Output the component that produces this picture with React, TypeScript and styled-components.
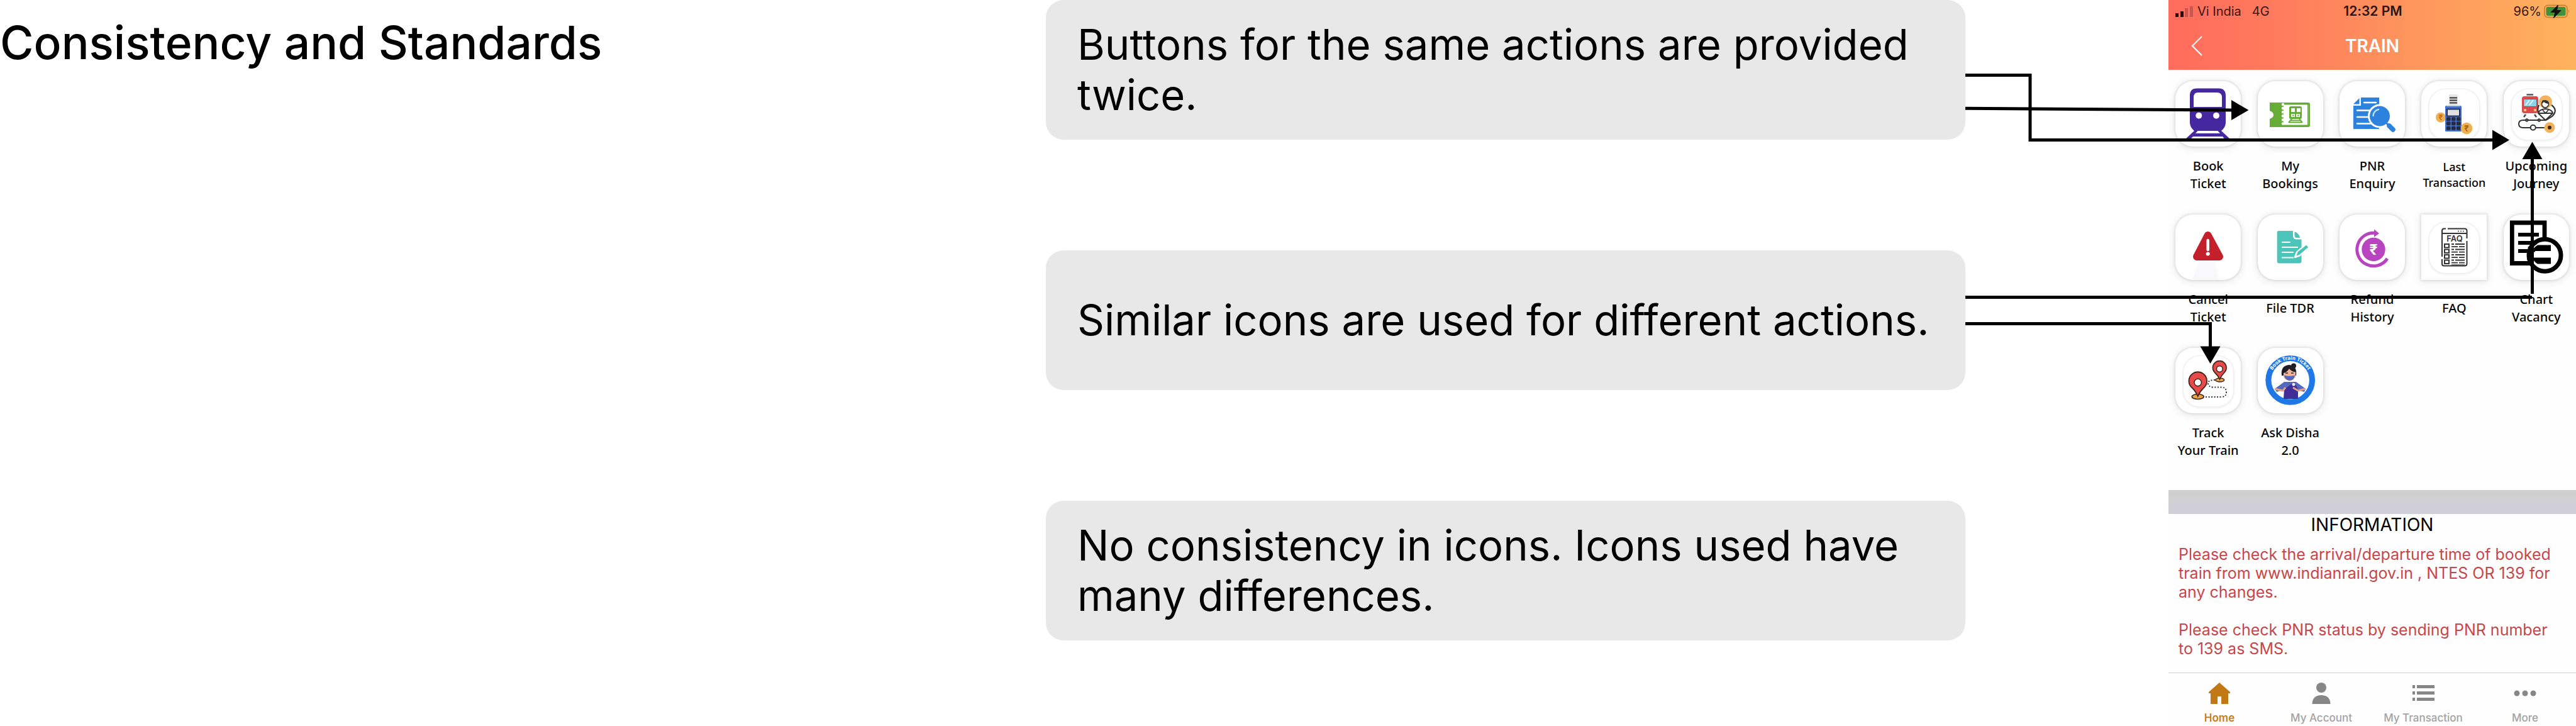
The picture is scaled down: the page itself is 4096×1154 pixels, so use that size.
import React from "react";
import styled, { createGlobalStyle } from "styled-components";

const GlobalStyle = createGlobalStyle`
  *, *::before, *::after { box-sizing: border-box; }
  body { margin: 0; background: #fff; color: #000; font-family: Inter, "Liberation Sans", sans-serif; font-variant-ligatures: none; }
  h1, h2, p, ul { margin: 0; padding: 0; }
  button { border: 0; padding: 0; background: none; font: inherit; color: inherit; cursor: pointer; }
`;

/* ---------- board ---------- */

const Board = styled.main`
  position: relative;
  display: grid;
  grid-template-columns: 1fr 1462px 648px;
  column-gap: 323px;
  align-items: start;
`;

const Intro = styled.div`
  display: grid;
  grid-column: 1 / 3;
  grid-template-columns: 1fr 1462px;
`;

const Title = styled.h1`
  padding-top: 24px;
  font-size: 73px;
  line-height: 88px;
  font-weight: 500;
  white-space: nowrap;
`;

const Notes = styled.ul`
  display: flex;
  flex-direction: column;
  gap: 176px;
  list-style: none;
`;

const Note = styled.li`
  display: flex;
  align-items: center;
  min-height: 222px;
  padding: 30px 50px;
  border-radius: 28px;
  background: #e8e8e8;
  font-size: 67px;
  line-height: 80px;
`;

const Arrows = styled.svg`
  position: absolute;
  top: 0;
  right: 0;
  pointer-events: none;
`;

/* ---------- phone ---------- */

const Phone = styled.section`
  display: flex;
  flex-direction: column;
  background: #fefefe;
`;

const PhoneHeader = styled.header`
  background: linear-gradient(90deg, #ff6c5c 0%, #ff7a5c 25%, #fd965c 60%, #ffb35c 100%);
`;

const StatusBar = styled.div`
  display: grid;
  grid-template-columns: 1fr auto 1fr;
  padding: 6px 9px 0 11px;
  font-size: 20px;
  line-height: 24px;
  color: #3a1512;
`;

const StatusGroup = styled.div<{ $end?: boolean }>`
  display: flex;
  align-items: center;
  justify-content: ${(p) => (p.$end ? "flex-end" : "flex-start")};
  gap: ${(p) => (p.$end ? "4px" : "7px")};
`;

const Network = styled.span`
  padding-left: 10px;
`;

const Clock = styled.time`
  font-size: 21px;
  font-weight: 600;
  color: #2b1410;
`;

const NavBar = styled.div`
  display: grid;
  grid-template-columns: 1fr auto 1fr;
  align-items: center;
  padding: 27px 36px 22px;
  color: #fff;
`;

const BackButton = styled.button`
  display: flex;
  justify-self: start;
`;

const NavTitle = styled.h2`
  font-size: 28px;
  line-height: 32px;
  font-weight: 600;
`;

const Services = styled.div`
  display: grid;
  grid-template-columns: repeat(5, minmax(0, 1fr));
  gap: 35px 26px;
  padding: 18px 11px 49px;
`;

const Service = styled.button`
  display: flex;
  flex-direction: column;
  align-items: center;
  gap: 17px;
`;

const Tile = styled.span<{ $square?: boolean }>`
  display: block;
  width: 104px;
  height: 104px;
  border-radius: ${(p) => (p.$square ? "0" : "28px")};
  background: #fff;
  box-shadow: 0 0 3px 2px rgba(0, 0, 0, 0.07), 0 2px 12px 2px rgba(0, 0, 0, 0.08);

  svg { display: block; }
`;

const Label = styled.span<{ $small?: boolean }>`
  display: flex;
  align-items: center;
  min-height: 56px;
  font-family: "Noto Sans", "Open Sans", sans-serif;
  font-weight: 500;
  font-size: ${(p) => (p.$small ? "18px" : "20px")};
  line-height: ${(p) => (p.$small ? "25px" : "28px")};
  color: #050505;
  white-space: pre;
`;

const Band = styled.div`
  height: 38px;
  background: linear-gradient(#cfcfcf 0%, #d1d1d1 35%, #d0cfd7 60%);
`;

const Info = styled.section`
  padding: 1px 16px 23px;
`;

const InfoTitle = styled.h2`
  margin-bottom: 16px;
  font-size: 28px;
  line-height: 32px;
  font-weight: 400;
  text-align: center;
`;

const InfoText = styled.p`
  font-size: 25px;
  line-height: 30px;
  color: #c5474b;

  & + & { margin-top: 30px; }
`;

const TabBar = styled.nav`
  display: grid;
  grid-template-columns: repeat(4, 1fr);
  padding: 15px 0 3px;
  border-top: 1px solid #cfcfcf;
`;

const Tab = styled.button<{ $active?: boolean }>`
  display: flex;
  flex-direction: column;
  align-items: center;
  gap: 12px;
  font-size: 17px;
  line-height: 20px;
  font-weight: ${(p) => (p.$active ? 600 : 500)};
  color: ${(p) => (p.$active ? "#c87d1a" : "#a3a3a3")};
`;

/* ---------- service icons (104 x 104 artwork) ---------- */

const Art = ({ children }: { children: React.ReactNode }) => (
  <svg width="104" height="104" viewBox="0 0 104 104" aria-hidden="true">
    {children}
  </svg>
);

const InnerTile = () => (
  <>
    <rect x="10" y="11" width="85" height="86" rx="29" fill="#f8f8f8" />
    <rect x="11.500" y="12" width="82" height="83" rx="27.500" fill="#f1f1f1" />
    <rect x="13" y="13" width="79" height="80" rx="26" fill="#fff" />
  </>
);

const Rupee = ({ x, y, size, fill }: { x: number; y: number; size: number; fill: string }) => (
  <text x={x} y={y} fontSize={size} fill={fill} fontWeight="700" textAnchor="middle" fontFamily="Inter, 'DejaVu Sans', sans-serif">
    ₹
  </text>
);

const BookIcon = () => (
  <Art>
    <path d="M34 11.500H69Q80 11.500 80 23V66Q80 73 73 79L86 91H17L30 79Q23 73 23 66V23Q23 11.500 34 11.500Z" fill="#4527a0" />
    <path d="M36 18H66Q74 18 74 26V41H29V26Q29 18 36 18Z" fill="#fff" />
    <circle cx="37.300" cy="54.700" r="5" fill="#fff" />
    <circle cx="65" cy="54.700" r="5" fill="#fff" />
    <path d="M35.500 79H67.500L71 83H32Z M28 88H75L77.500 91H25Z" fill="#fff" />
  </Art>
);

const TicketIcon = () => (
  <Art>
    <path d="M19 34H80Q83 34 83 37V70Q83 73 80 73H19V60Q25 58 25 53.500Q25 49 19 47Z" fill="#66ad35" />
    <path d="M41 37.500H79V69.500H41Z" fill="#fff" />
    <path d="M40 37V71" stroke="#fff" strokeWidth="4.500" strokeDasharray="0.1 6" strokeLinecap="round" />
    <path d="M80.500 38V69" stroke="#8cc665" strokeWidth="1" />
    <rect x="50" y="40" width="20" height="20" rx="2.500" fill="#66ad35" />
    <path d="M53 43h6v6h-6zM62 43h6v6h-6z" fill="#fff" />
    <path d="M53 52h14v5h-14z" fill="#fff" />
    <path d="M55 54.500h2.500M63 54.500h2.500M60 52v5" stroke="#66ad35" strokeWidth="2" />
    <path d="M54 60l-5 6M66 60l5 6M53 62.500h14M50 65.500h20" stroke="#66ad35" strokeWidth="2" />
  </Art>
);

const EnquiryIcon = () => (
  <Art>
    <path d="M34 26H63V76H22V39H34Z" fill="#2c82dc" />
    <path d="M22 36.500L31.500 27V36.500Z" fill="#2c82dc" />
    <path d="M39 34H58M28 46.500H52M28 57H46M28 67.500H54" stroke="#fff" strokeWidth="2.500" strokeLinecap="round" />
    <circle cx="64" cy="55.500" r="19" fill="#fff" />
    <path d="M75 67L85 77" stroke="#fff" strokeWidth="10" />
    <path d="M74 66L77 69" stroke="#2c82dc" strokeWidth="3" />
    <circle cx="64" cy="55.500" r="16" fill="#2c82dc" />
    <path d="M79 71L85 77" stroke="#2c82dc" strokeWidth="7.500" strokeLinecap="round" />
    <path d="M53.500 55A10.500 10.500 0 0 1 62 45" stroke="#b9e0ff" strokeWidth="2.500" strokeLinecap="round" fill="none" />
  </Art>
);

const LastTransactionIcon = () => (
  <Art>
    <InnerTile />
    <rect x="44" y="21" width="14" height="20" fill="#e6e6e6" />
    <path d="M45 26.500H57M45 30.500H57M45 34.500H57" stroke="#333" strokeWidth="1.800" />
    <circle cx="31" cy="57.700" r="8" fill="#efb052" />
    <Rupee x={31} y={62} size={12} fill="#bd711b" />
    <rect x="38" y="39" width="26" height="41" rx="1.500" fill="#3e6fd2" />
    <path d="M40 39H62" stroke="#bcd6f5" strokeWidth="2" />
    <rect x="41" y="44.500" width="20" height="11" fill="#e1e1e1" stroke="#263257" strokeWidth="2" />
    {[60, 67, 74.5].map((y) =>
      [43, 51, 59].map((x) => <rect key={`${x}-${y}`} x={x - 3} y={y - 2.8} width="6.500" height="6" rx="1.500" fill="#262b3c" />)
    )}
    <circle cx="72" cy="75" r="9.300" fill="#efb052" />
    <Rupee x={72} y={80} size={13} fill="#a96516" />
  </Art>
);

const JourneyIcon = () => (
  <Art>
    <InnerTile />
    <path d="M36.500 21.500H47" stroke="#555" strokeWidth="2.500" />
    <rect x="29" y="24" width="26" height="27" rx="4" fill="#e04a4c" />
    <rect x="31.500" y="28.500" width="21" height="12" rx="1.500" fill="#8ed2e6" stroke="#c63b40" />
    <path d="M35 38L41 30M41 38L47 30" stroke="#e4f8ff" strokeWidth="2" />
    <circle cx="34" cy="46" r="2" fill="#ffdc82" />
    <circle cx="50" cy="46" r="2" fill="#ffdc82" />
    <path d="M35 53L32 57M49 53L52 57" stroke="#444" strokeWidth="2.500" />
    <circle cx="66.500" cy="33" r="10.500" fill="#f0b25a" />
    <path d="M56 38Q52 47 57 52M76 38Q87 46 77 56L67 62" stroke="#333" strokeWidth="2.200" fill="none" />
    <path d="M55 51L66.500 62L78 51Q77 45 66.500 44Q56 45 55 51Z" fill="#fff" stroke="#333" strokeWidth="2" />
    <path d="M55 51H78M62 46L66.500 51L71 46" stroke="#333" strokeWidth="1.800" fill="none" />
    <circle cx="66" cy="36.500" r="5.500" fill="#fff" stroke="#333" strokeWidth="1.600" />
    <path d="M60.500 36Q60 30 64 30Q72 30 72 36Q67 36 64 33Q62 35 60.500 36Z" fill="#333" />
    <path d="M66 62H31Q24 62 24 68Q24 74 31 74H66" stroke="#333" strokeWidth="2" fill="none" />
    <circle cx="36.700" cy="62" r="2.300" fill="#555" stroke="#222" />
    <circle cx="56.300" cy="62" r="2.300" fill="#555" stroke="#222" />
    <circle cx="46.700" cy="73.700" r="4" fill="#fff" stroke="#333" strokeWidth="2" />
    <circle cx="73" cy="73.700" r="8.500" fill="#f0b25a" />
    <circle cx="73" cy="73.700" r="3" fill="#41231d" />
  </Art>
);

const CancelIcon = () => (
  <Art>
    <path d="M38 75H62L69 103H26Z" fill="#f9f9fd" />
    <path d="M51.700 33L34 67H70Z" fill="#c4202b" stroke="#c4202b" strokeWidth="12" strokeLinejoin="round" />
    <path d="M51.700 41V56" stroke="#fff" strokeWidth="4.500" strokeLinecap="round" />
    <circle cx="51.700" cy="62.500" r="3" fill="#fff" />
  </Art>
);

const FileIcon = () => (
  <Art>
    <path d="M33 26H56V34Q56 39.500 62 39.500H69.500V74Q69.500 77.500 66 77.500H34Q30.700 77.500 30.700 74V29Q30.700 26 33 26Z" fill="#4cc4b9" />
    <path d="M58.500 27.500Q64 28 67.500 37H62Q58.500 37 58.500 33Z" fill="#4cc4b9" />
    <path d="M39 44H51M39 52H63M39 60H56M39 68.500H56" stroke="#fff" strokeWidth="2.200" strokeLinecap="round" />
    <path d="M59 68L62 60L77 47L82 52L67 65Z" fill="#4cc4b9" stroke="#fff" strokeWidth="2.500" strokeLinejoin="round" />
    <path d="M64.500 61.500L78.500 50.500" stroke="#4cc4b9" strokeWidth="4.500" />
  </Art>
);

const RefundIcon = () => (
  <Art>
    <circle cx="54" cy="55.500" r="18.700" fill="#b944bf" />
    <path d="M76 70A26.300 26.300 0 1 1 58 29.500" stroke="#b944bf" strokeWidth="5" fill="none" />
    <path d="M55 23.500L63 30L55 36Z" fill="#b944bf" />
    <Rupee x={54} y={64} size={23} fill="#fff" />
  </Art>
);

const FaqIcon = () => (
  <Art>
    <InnerTile />
    <path d="M39 22.500H36Q33 22.500 33 26V67M42 22.500H69Q72.500 22.500 72.500 26V38M72.500 42V78Q72.500 81.500 69 81.500H36Q33 81.500 33 78V71M33 30H72" stroke="#333" strokeWidth="2" fill="none" />
    <path d="M58 26.500H69" stroke="#555" strokeWidth="1.500" strokeDasharray="2 2" />
    <text x="53" y="43" fontSize="13" fontWeight="600" textAnchor="middle" fill="#333" fontFamily="Inter, sans-serif">
      FAQ
    </text>
    {[47, 55.5, 64, 72.5].map((y) => (
      <g key={y} stroke="#333" fill="none">
        <rect x="37" y={y} width="7" height="5.500" strokeWidth="2" />
        <path d={`M48 ${y}h4M54 ${y}h15M48 ${y + 4.2}h10M60 ${y + 4.2}h9`} strokeWidth="1.800" />
      </g>
    ))}
    <path d="M48 80H69" stroke="#333" strokeWidth="1.200" />
  </Art>
);

const ChartIcon = () => (
  <Art>
    <path d="M65 37V13H13.300V77.500H48" stroke="#000" strokeWidth="6.800" fill="none" />
    <path d="M23 32H56M23 45H47M23 58H39" stroke="#000" strokeWidth="6" />
    <circle cx="65.500" cy="64.700" r="25.500" fill="#fff" stroke="#000" strokeWidth="7" />
    <path d="M54 48.500H75V58H45Q48 52 54 48.500ZM45 68.500H75V78.500H54Q48 75 45 68.500Z" fill="#000" />
    <path d="M39 53L52 46M39 58H50M39 64H44" stroke="#000" strokeWidth="3" />
  </Art>
);

const TrackIcon = () => (
  <Art>
    <InnerTile />
    <path d="M63 51Q52 51 52 56Q52 62 60 62.500H74Q81 63 81 70Q81 78 73 78H46" stroke="#333" strokeWidth="2" strokeDasharray="2 2.500" fill="none" />
    <ellipse cx="35.700" cy="77.500" rx="9.500" ry="4" fill="#e9a54b" stroke="#42251d" strokeWidth="1.700" />
    <path d="M35.700 77Q32 68 25 62A14.300 14.300 0 1 1 46.500 62Q39 69 35.700 77Z" fill="#e84a49" stroke="#42251d" strokeWidth="1.800" />
    <circle cx="35.700" cy="55" r="5.700" fill="#fff" stroke="#42251d" strokeWidth="1.500" />
    <ellipse cx="70.700" cy="51" rx="7" ry="3" fill="#e9a54b" stroke="#42251d" strokeWidth="1.500" />
    <path d="M70.500 50Q68 44 62.500 39A10.800 10.800 0 1 1 78 39Q73 44 70.500 50Z" fill="#e84a49" stroke="#42251d" strokeWidth="1.700" />
    <circle cx="70.300" cy="33.500" r="4.800" fill="#fff" stroke="#42251d" strokeWidth="1.500" />
  </Art>
);

const DishaIcon = () => (
  <Art>
    <circle cx="51.700" cy="51.300" r="34.800" fill="#fff" stroke="#2078e6" strokeWidth="9.200" />
    <path id="disha-arc" d="M19.200 51.300A32.500 32.500 0 0 1 84.200 51.300" fill="none" />
    <text fontSize="8" fontWeight="700" fill="#fff" fontFamily="'Noto Sans', sans-serif" textAnchor="middle">
      <textPath href="#disha-arc" startOffset="50%">Book Train Ticket</textPath>
    </text>
    <circle cx="57" cy="28.500" r="4" fill="#211b26" />
    <path d="M38 44Q36 28 50 27Q63 28 61 44Z" fill="#211b26" />
    <path d="M41 40Q46 39 50 33Q55 39 60 38V46Q56 52 50 52Q43 51 41 46Z" fill="#efb497" />
    <path d="M44 40H48M53 40H57" stroke="#332029" strokeWidth="1.500" />
    <path d="M42 43.500Q50 46 59 43.500Q58 52 50 52Q43 51 42 43.500Z" fill="#5366c0" />
    <path d="M42 54L27 65L30 70L42 66V81H64V67L74 70L76 65L61 54Z" fill="#5468be" />
    <path d="M42 66L58 54L64 66V81H41Z" fill="#402d98" />
    <path d="M27 65L40 68L44 63M76 65L64 68L56 63" stroke="#e2a184" strokeWidth="3" fill="none" />
    <circle cx="57" cy="58" r="2.500" fill="#e3eeff" />
  </Art>
);

/* ---------- data ---------- */

type ServiceItem = { label: string; icon: React.ReactNode; small?: boolean; square?: boolean };

const services: ServiceItem[] = [
  { label: "Book\nTicket", icon: <BookIcon /> },
  { label: "My\nBookings", icon: <TicketIcon /> },
  { label: "PNR\nEnquiry", icon: <EnquiryIcon /> },
  { label: "Last\nTransaction", icon: <LastTransactionIcon />, small: true },
  { label: "Upcoming\nJourney", icon: <JourneyIcon /> },
  { label: "Cancel\nTicket", icon: <CancelIcon /> },
  { label: "File TDR", icon: <FileIcon /> },
  { label: "Refund\nHistory", icon: <RefundIcon /> },
  { label: "FAQ", icon: <FaqIcon />, square: true },
  { label: "Chart\nVacancy", icon: <ChartIcon /> },
  { label: "Track\nYour Train", icon: <TrackIcon /> },
  { label: "Ask Disha\n2.0", icon: <DishaIcon /> },
];

const notes = [
  "Buttons for the same actions are provided twice.",
  "Similar icons are used for different actions.",
  "No consistency in icons. Icons used have many differences.",
];

const tabs = [
  {
    label: "Home",
    active: true,
    icon: <path d="M18 0L35 15V17H32V34H21V22H15V34H4V17H1V15Z" fill="#c27814" />,
  },
  {
    label: "My Account",
    icon: (
      <g fill="#868686">
        <circle cx="18" cy="8" r="8" />
        <path d="M3.500 34Q4 20 18 20Q32 20 32.500 34Z" />
      </g>
    ),
  },
  {
    label: "My Transaction",
    icon: <path d="M1 4h4v5h-4zM8 4h28v5h-28zM1 14h4v5h-4zM8 14h28v5h-28zM1 24h4v5h-4zM8 24h28v5h-28z" fill="#868686" />,
  },
  {
    label: "More",
    icon: (
      <g fill="#868686">
        <circle cx="5" cy="17" r="4.500" />
        <circle cx="18" cy="17" r="4.500" />
        <circle cx="31" cy="17" r="4.500" />
      </g>
    ),
  },
];

export default function App() {
  return (
    <>
      <GlobalStyle />
      <Board>
        <Intro>
          <Title>Consistency and Standards</Title>
          <Notes>
            {notes.map((note) => (
              <Note key={note}>{note}</Note>
            ))}
          </Notes>
        </Intro>

        <Phone>
          <PhoneHeader>
            <StatusBar>
              <StatusGroup>
                <svg width="28" height="20" viewBox="0 0 28 20" aria-hidden="true">
                  <path d="M0 13h5v6h-5zM8 10h5v9h-5z" fill="#1d0c0a" />
                  <path d="M15 5h5v14h-5zM23 2h5v17h-5z" fill="#c9574f" />
                </svg>
                <span>Vi India</span>
                <Network>4G</Network>
              </StatusGroup>
              <Clock>12:32 PM</Clock>
              <StatusGroup $end>
                <span>96%</span>
                <svg width="42" height="24" viewBox="0 0 42 24" aria-hidden="true">
                  <rect x="1" y="2.500" width="36" height="19" rx="5" fill="none" stroke="#c98535" strokeWidth="1.800" />
                  <rect x="3.500" y="5" width="31" height="14" rx="3" fill="#3f9237" />
                  <path d="M39 9q2.500 3 0 6z" fill="#c98535" />
                  <path d="M22.500 2L11 13.500H18L15.500 22.500L27 10.500H20.500Z" fill="#111" stroke="#111" strokeWidth="1" strokeLinejoin="round" />
                </svg>
              </StatusGroup>
            </StatusBar>
            <NavBar>
              <BackButton aria-label="Back">
                <svg width="18" height="32" viewBox="0 0 18 32" fill="none" stroke="#fff" strokeWidth="2" aria-hidden="true">
                  <path d="M17 1L2 16L17 31" />
                </svg>
              </BackButton>
              <NavTitle>TRAIN</NavTitle>
            </NavBar>
          </PhoneHeader>

          <Services>
            {services.map((s) => (
              <Service key={s.label}>
                <Tile $square={s.square}>{s.icon}</Tile>
                <Label $small={s.small}>{s.label}</Label>
              </Service>
            ))}
          </Services>

          <Band />

          <Info>
            <InfoTitle>INFORMATION</InfoTitle>
            <InfoText>
              Please check the arrival/departure time of booked train from www.indianrail.gov.in , NTES OR 139 for any
              changes.
            </InfoText>
            <InfoText>Please check PNR status by sending PNR number to 139 as SMS.</InfoText>
          </Info>

          <TabBar>
            {tabs.map((t) => (
              <Tab key={t.label} $active={t.active}>
                <svg width="36" height="34" viewBox="0 0 36 34" aria-hidden="true">
                  {t.icon}
                </svg>
                {t.label}
              </Tab>
            ))}
          </TabBar>
        </Phone>

        <Arrows width="972" height="600" viewBox="0 0 972 600" fill="none" stroke="#000" strokeWidth="5" aria-hidden="true">
          <path d="M1 119.500H104V222.500H842" />
          <path d="M1 172.300L426 175" />
          <path d="M1 472.500H902M902.500 467V250" />
          <path d="M1 514.500H390.500V553" />
          <g fill="#000" stroke="none">
            <path d="M839 206.500L866 222.500L839 238.500Z" />
            <path d="M424 159L451.500 175L424 191Z" />
            <path d="M886.500 253L902.500 225.500L918.500 253Z" />
            <path d="M374.500 550.500L390.500 578L406.500 550.500Z" />
          </g>
        </Arrows>
      </Board>
    </>
  );
}
